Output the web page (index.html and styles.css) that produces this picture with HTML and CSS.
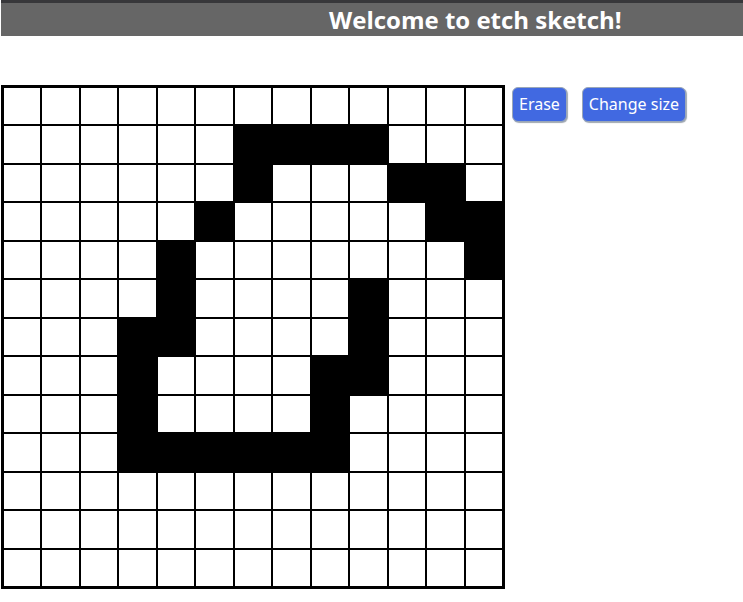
FILE: index.html
```html
<!DOCTYPE html>
<html>
<head>
<meta charset="utf-8">
<link rel="stylesheet" href="styles.css">
</head>
<body>
<header class="top">
  <h1 class="title">Welcome to etch sketch!</h1>
</header>
<main class="main">
  <div class="board" id="board"></div>
  <div class="controls">
    <button class="btn">Erase</button>
    <button class="btn">Change size</button>
  </div>
</main>
<script>
  var black = {
    1: [6,7,8,9],
    2: [6,10,11],
    3: [5,11,12],
    4: [4,12],
    5: [4,9],
    6: [3,4,9],
    7: [3,8,9],
    8: [3,8],
    9: [3,4,5,6,7,8]
  };
  var board = document.getElementById('board');
  for (var r = 0; r < 13; r++) {
    for (var c = 0; c < 13; c++) {
      var d = document.createElement('div');
      d.className = 'cell';
      if (black[r] && black[r].indexOf(c) !== -1) d.className += ' on';
      board.appendChild(d);
    }
  }
</script>
</body>
</html>
```
FILE: styles.css
```css
html, body {
  margin: 0;
  padding: 0;
  background: #fff;
}
.top {
  margin-left: 1px;
  height: 33px;
  border-top: 3px solid #37373a;
  background: #666666;
  display: flex;
  align-items: center;
}
.title {
  margin: 0;
  padding-left: 328px;
  font-family: "Open Sans", "Noto Sans", sans-serif;
  font-weight: 700;
  font-size: 24px;
  line-height: 33px;
  color: #fff;
}
.main {
  display: flex;
  align-items: flex-start;
  margin-top: 49px;
  margin-left: 1px;
}
.board {
  width: 500px;
  height: 500px;
  border: 2px solid #000;
  display: grid;
  grid-template-columns: repeat(13, 1fr);
  grid-template-rows: repeat(13, 1fr);
  flex: none;
}
.cell {
  border: 1px solid #000;
  background: #fff;
}
.cell.on {
  background: #000;
}
.controls {
  display: flex;
  gap: 15px;
  margin-left: 7px;
  margin-top: 2px;
}
.btn {
  font-family: "Noto Sans", "Open Sans", sans-serif;
  font-size: 16px;
  line-height: 21px;
  color: #fff;
  background: #4169e1;
  border: 1px solid #9aa7b8;
  border-radius: 6px;
  padding: 6px 6px;
  box-shadow: 1px 1px 1px #a0a8b0;
  cursor: pointer;
}
```
